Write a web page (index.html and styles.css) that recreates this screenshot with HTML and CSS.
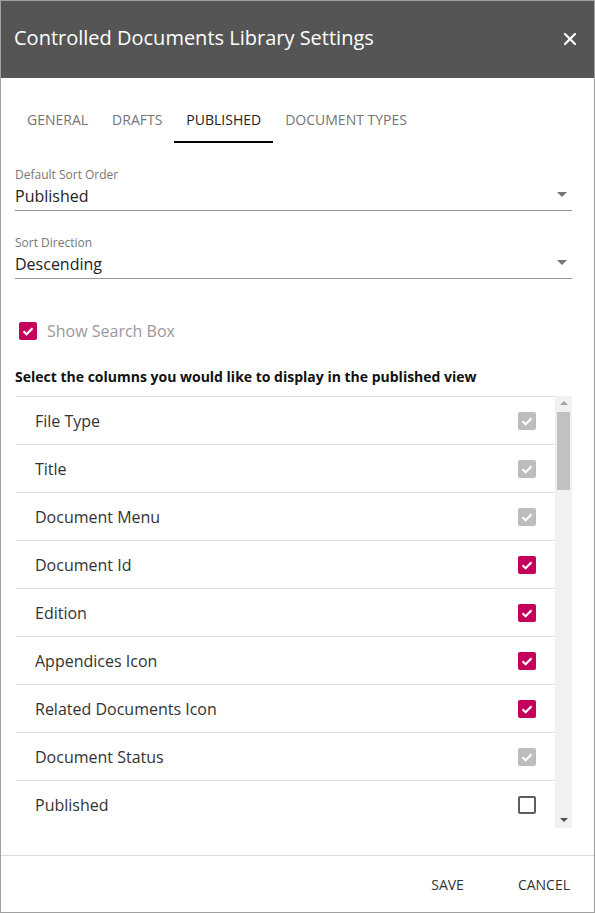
FILE: index.html
```html
<!DOCTYPE html>
<html>
<head>
<meta charset="utf-8">
<link rel="stylesheet" href="styles.css">
</head>
<body>
<div class="dialog">
  <div class="header">
    <div class="title">Controlled Documents Library Settings</div>
    <svg class="close" width="12" height="12" viewBox="0 0 12 12"><path d="M1 1L11 11M11 1L1 11" stroke="#fff" stroke-width="2.2" stroke-linecap="square"/></svg>
  </div>
  <div class="tabs">
    <div class="tab">General</div>
    <div class="tab">Drafts</div>
    <div class="tab active">Published</div>
    <div class="tab">Document Types</div>
  </div>
  <div class="body">
    <div class="field">
      <div class="label">Default Sort Order</div>
      <div class="value"><span>Published</span><span class="caret"></span></div>
    </div>
    <div class="field">
      <div class="label">Sort Direction</div>
      <div class="value"><span>Descending</span><span class="caret"></span></div>
    </div>
    <div class="check-row">
      <span class="cb checked"><svg viewBox="0 0 18 18"><path d="M4.5 9.2L7.6 12.2L13.5 6.2" fill="none" stroke="#fff" stroke-width="2.2"/></svg></span>
      <span class="check-label">Show Search Box</span>
    </div>
    <div class="heading">Select the columns you would like to display in the published view</div>
    <div class="listwrap">
      <div class="list">
        <div class="row"><span>File Type</span><span class="cb disabled"><svg viewBox="0 0 18 18"><path d="M4.5 9.2L7.6 12.2L13.5 6.2" fill="none" stroke="#fff" stroke-width="2.2"/></svg></span></div>
        <div class="row"><span>Title</span><span class="cb disabled"><svg viewBox="0 0 18 18"><path d="M4.5 9.2L7.6 12.2L13.5 6.2" fill="none" stroke="#fff" stroke-width="2.2"/></svg></span></div>
        <div class="row"><span>Document Menu</span><span class="cb disabled"><svg viewBox="0 0 18 18"><path d="M4.5 9.2L7.6 12.2L13.5 6.2" fill="none" stroke="#fff" stroke-width="2.2"/></svg></span></div>
        <div class="row"><span>Document Id</span><span class="cb checked"><svg viewBox="0 0 18 18"><path d="M4.5 9.2L7.6 12.2L13.5 6.2" fill="none" stroke="#fff" stroke-width="2.2"/></svg></span></div>
        <div class="row"><span>Edition</span><span class="cb checked"><svg viewBox="0 0 18 18"><path d="M4.5 9.2L7.6 12.2L13.5 6.2" fill="none" stroke="#fff" stroke-width="2.2"/></svg></span></div>
        <div class="row"><span>Appendices Icon</span><span class="cb checked"><svg viewBox="0 0 18 18"><path d="M4.5 9.2L7.6 12.2L13.5 6.2" fill="none" stroke="#fff" stroke-width="2.2"/></svg></span></div>
        <div class="row"><span>Related Documents Icon</span><span class="cb checked"><svg viewBox="0 0 18 18"><path d="M4.5 9.2L7.6 12.2L13.5 6.2" fill="none" stroke="#fff" stroke-width="2.2"/></svg></span></div>
        <div class="row"><span>Document Status</span><span class="cb disabled"><svg viewBox="0 0 18 18"><path d="M4.5 9.2L7.6 12.2L13.5 6.2" fill="none" stroke="#fff" stroke-width="2.2"/></svg></span></div>
        <div class="row"><span>Published</span><span class="cb empty"></span></div>
      </div>
      <div class="scrollbar">
        <span class="arrow up"></span>
        <span class="thumb"></span>
        <span class="spacer"></span>
        <span class="arrow down"></span>
      </div>
    </div>
  </div>
  <div class="footer">
    <div class="btn">Save</div>
    <div class="btn">Cancel</div>
  </div>
</div>
</body>
</html>
```

FILE: styles.css
```css
html, body {
  margin: 0;
  padding: 0;
  background: #fff;
}
.dialog {
  width: 595px;
  height: 913px;
  box-sizing: border-box;
  border: 1px solid #a0a0a0;
  display: flex;
  flex-direction: column;
  font-family: "Open Sans", "Liberation Sans", sans-serif;
  color: #333;
}
.header {
  height: 77px;
  flex: none;
  background: #555555;
  display: flex;
  align-items: center;
  justify-content: space-between;
  padding: 0 18px 5px 13px;
  box-sizing: border-box;
}
.title {
  color: #fff;
  font-size: 20px;
}
.close {
  display: block;
  margin-top: 3px;
}
.tabs {
  display: flex;
  margin-top: 20px;
  padding-left: 14px;
  flex: none;
}
.tab {
  height: 45px;
  line-height: 43px;
  box-sizing: border-box;
  padding: 0 12px;
  font-size: 14px;
  text-transform: uppercase;
  color: #757575;
  border-bottom: 2px solid transparent;
}
.tab.active {
  color: #222;
  border-bottom-color: #000;
}
.body {
  flex: 1;
  padding: 0 22px 0 14px;
  display: flex;
  flex-direction: column;
}
.field {
  margin-top: 23px;
}
.label {
  font-size: 12px;
  line-height: 18px;
  color: #777;
}
.value {
  display: flex;
  justify-content: space-between;
  align-items: center;
  font-size: 16px;
  line-height: 24px;
  padding-bottom: 2px;
  color: #222;
  border-bottom: 1px solid #949494;
}
.caret {
  width: 0;
  height: 0;
  border-left: 5px solid transparent;
  border-right: 5px solid transparent;
  border-top: 5px solid #757575;
  margin-right: 5px;
  margin-top: -3px;
}
.check-row {
  margin-top: 40px;
  height: 24px;
  display: flex;
  align-items: center;
  padding-left: 4px;
}
.check-label {
  font-size: 16px;
  color: #999;
  margin-left: 10px;
}
.cb {
  width: 18px;
  height: 18px;
  box-sizing: border-box;
  border-radius: 2px;
  display: block;
  flex: none;
}
.cb svg {
  display: block;
  width: 18px;
  height: 18px;
}
.cb.checked {
  background: #c4005a;
}
.cb.disabled {
  background: #bdbdbd;
}
.cb.empty {
  border: 2px solid #5e5e5e;
}
.heading {
  margin-top: 24px;
  font-size: 14px;
  line-height: 20px;
  font-weight: bold;
  color: #111;
}
.listwrap {
  margin-top: 9px;
  display: flex;
  height: 432px;
  padding-left: 1px;
}
.list {
  flex: 1;
  border-top: 1px solid #e0e0e0;
  overflow: hidden;
}
.row {
  height: 47px;
  border-bottom: 1px solid #e0e0e0;
  display: flex;
  align-items: center;
  justify-content: space-between;
  padding: 0 19px 0 19px;
  font-size: 16px;
  color: #333;
}
.scrollbar {
  width: 17px;
  background: #f1f1f1;
  display: flex;
  flex-direction: column;
  align-items: center;
}
.arrow {
  width: 0;
  height: 0;
  border-left: 4px solid transparent;
  border-right: 4px solid transparent;
}
.arrow.up {
  border-bottom: 4px solid #a3a3a3;
  margin-top: 5px;
}
.arrow.down {
  border-top: 4px solid #505050;
  margin-bottom: 6px;
}
.thumb {
  width: 13px;
  height: 78px;
  background: #c1c1c1;
  margin-top: 7px;
}
.spacer {
  flex: 1;
}
.footer {
  flex: none;
  height: 56px;
  border-top: 1px solid #dcdcdc;
  display: flex;
  justify-content: flex-end;
  align-items: center;
  gap: 22px;
  padding-right: 8px;
}
.btn {
  font-size: 14px;
  text-transform: uppercase;
  color: #333;
  padding: 0 16px;
}
```
